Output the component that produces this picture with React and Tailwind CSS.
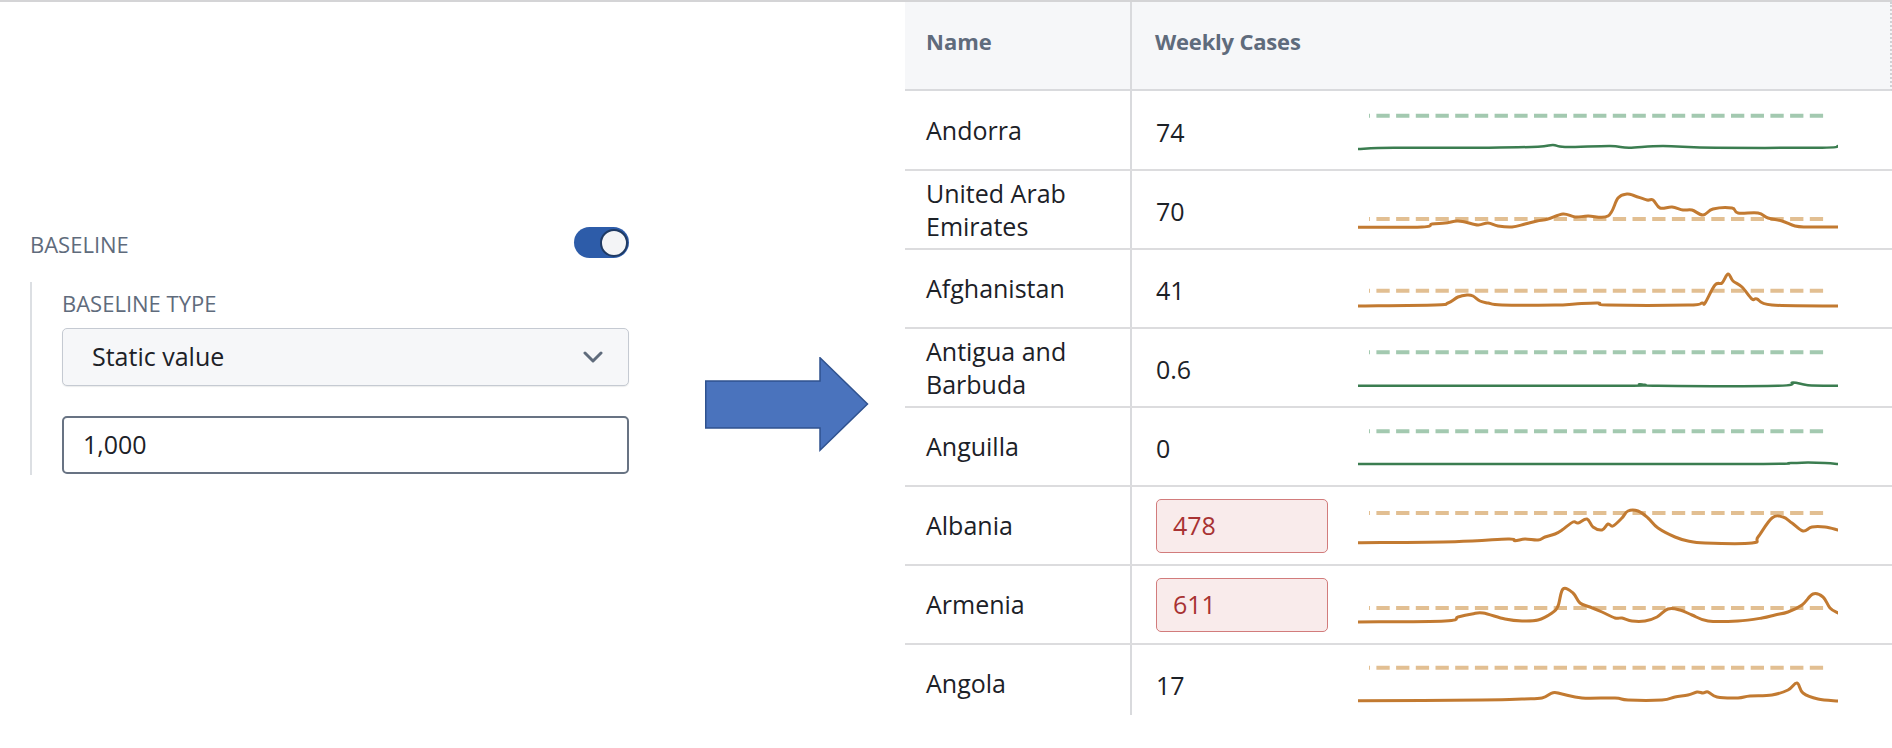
import React from "react";

const ORANGE = "#c27a31";
const ORANGE_DASH = "#e2bf92";
const GREEN = "#3b7d50";
const GREEN_DASH = "#a3c9b0";

const rows = [
  {
    name: ["Andorra"],
    value: "74",
    color: "green",
    dash: 26.7,
    off: 2,
    pts: [[0,60],[36,58.7],[131,58.7],[180,57.7],[195,56],[207,58],[252,57],[271,58.7],[305,57],[358,58.7],[464,58.7],[480,57]],
  },
  {
    name: ["United Arab", "Emirates"],
    value: "70",
    color: "orange",
    dash: 49,
    off: 1,
    pts: [[0,57.3],[64,57],[74,54],[87,53],[99,51],[107,52],[120,55],[130,53],[140,56],[154,57],[167,54],[179,51],[190,49],[205,44],[217,47],[230,46],[250,46],[260,28],[269,24],[277,26],[289,30],[295,30],[302,38],[314,37],[325,40],[334,40],[345,45],[355,39],[374,38],[380,43],[400,43],[410,48],[424,51],[437,56],[450,57],[480,57]],
  },
  {
    name: ["Afghanistan"],
    value: "41",
    color: "orange",
    dash: 41.7,
    off: 1,
    pts: [[0,57],[77,56],[90,54],[100,48],[109,46],[115,47],[122,52],[130,54],[144,56],[197,56],[217,55],[240,54],[250,56],[330,56],[344,54],[347,54],[357,36],[364,34],[370,25],[375,32],[384,38],[394,50],[399,50],[414,56],[480,57]],
  },
  {
    name: ["Antigua and", "Barbuda"],
    value: "0.6",
    color: "green",
    dash: 24.3,
    off: 1,
    pts: [[0,57.7],[260,57.7],[282,56.3],[300,57.7],[420,57.7],[435,54.5],[450,57.2],[480,57.7]],
  },
  {
    name: ["Anguilla"],
    value: "0",
    color: "green",
    dash: 24.3,
    off: 1,
    pts: [[0,57],[380,57],[433,56],[450,55.5],[467,56],[480,57]],
  },
  {
    name: ["Albania"],
    value: "478",
    alert: true,
    color: "orange",
    dash: 27,
    off: 1,
    pts: [[0,56.7],[97,55.7],[150,53],[157,54.7],[167,53],[180,54],[187,51],[197,48],[204,44],[215,36],[220,37],[229,33],[235,41],[244,44],[250,38],[255,40],[264,32],[270,25],[280,25],[290,32],[300,42],[317,51],[330,55],[347,57],[394,57],[400,51],[414,32],[425,31],[434,37],[445,45],[454,41],[467,41],[480,44]],
  },
  {
    name: ["Armenia"],
    value: "611",
    alert: true,
    color: "orange",
    dash: 43,
    off: 1,
    pts: [[0,57],[87,56],[100,52],[114,49],[125,48],[147,54],[164,56],[180,55],[194,48],[200,41],[205,24],[215,28],[222,38],[232,42],[244,47],[257,53],[264,53],[274,56],[287,56],[299,52],[310,44],[322,45],[334,50],[350,56],[380,56],[404,53],[417,50],[430,47],[444,40],[455,29],[465,32],[472,43],[480,48]],
  },
  {
    name: ["Angola"],
    value: "17",
    color: "orange",
    dash: 23.7,
    off: 1,
    pts: [[0,56.7],[124,56],[164,55],[184,54],[195,48.7],[204,50],[224,54],[257,54],[270,56],[304,56],[317,53],[330,51],[339,48],[345,49],[350,48],[359,53],[380,54],[392,52],[414,51],[430,46],[439,39],[445,49],[460,55],[480,57]],
  },
];

function smoothPath(pts) {
  const t = 0.18;
  let d = `M${pts[0][0]},${pts[0][1].toFixed(1)}`;
  for (let i = 0; i < pts.length - 1; i++) {
    const p0 = pts[i - 1] || pts[i];
    const p1 = pts[i];
    const p2 = pts[i + 1];
    const p3 = pts[i + 2] || p2;
    const c1x = p1[0] + (p2[0] - p0[0]) * t;
    const c1y = p1[1] + (p2[1] - p0[1]) * t;
    const c2x = p2[0] - (p3[0] - p1[0]) * t;
    const c2y = p2[1] - (p3[1] - p1[1]) * t;
    d += ` C${c1x.toFixed(1)},${c1y.toFixed(1)} ${c2x.toFixed(1)},${c2y.toFixed(1)} ${p2[0]},${p2[1].toFixed(1)}`;
  }
  return d;
}

function Sparkline({ row }) {
  const solid = row.color === "green" ? GREEN : ORANGE;
  const dashed = row.color === "green" ? GREEN_DASH : ORANGE_DASH;
  const pts = row.pts.map((p) => [p[0], p[1] - row.off]);
  return (
    <svg width="480" height="77" viewBox="0 0 480 77" className="block shrink-0">
      <line
        x1="11"
        x2="466"
        y1={row.dash - row.off}
        y2={row.dash - row.off}
        stroke={dashed}
        strokeWidth="4"
        strokeDasharray="13.3 6.4"
        strokeDashoffset="12.3"
      />
      <path
        d={smoothPath(pts)}
        fill="none"
        stroke={solid}
        strokeWidth={row.color === "green" ? 2.5 : 3}
        strokeLinejoin="round"
        strokeLinecap="round"
      />
    </svg>
  );
}

function Toggle() {
  return (
    <div className="w-[55px] h-[31px] rounded-full bg-[#2d5ca9] flex items-center justify-end pr-[1px]">
      <div className="w-[28px] h-[28px] rounded-full bg-[#f3f4f6] border-2 border-[#1f3a63]" />
    </div>
  );
}

function Chevron() {
  return (
    <svg width="20" height="12" viewBox="0 0 20 12" className="block">
      <path d="M2 2 L10 10 L18 2" fill="none" stroke="#5f6b7c" strokeWidth="3" strokeLinecap="round" strokeLinejoin="round" />
    </svg>
  );
}

function Arrow() {
  return (
    <svg width="164" height="96" viewBox="0 0 164 96" className="block shrink-0 ml-[76px] mt-[355px]">
      <polygon
        points="0.75,24 115,24 115,0.75 162.5,47 115,93.25 115,71 0.75,71"
        fill="#4a73bd"
        stroke="#2f528f"
        strokeWidth="1.5"
      />
    </svg>
  );
}

export default function App() {
  return (
    <div className="w-[1892px] h-[748px] bg-white border-t-2 border-[#d4d4d6] flex items-start font-['Open_Sans',sans-serif] overflow-hidden">
      {/* Left settings panel */}
      <div className="w-[905px] shrink-0 flex items-start">
        <div className="ml-[30px] mt-[225px] w-[599px]">
          <div className="flex items-center justify-between h-[31px]">
            <span className="text-[22px] leading-[31px] pt-[3px] font-medium text-[#5f6b7c]">BASELINE</span>
            <Toggle />
          </div>
          <div className="mt-[24px] border-l-2 border-[#dcdfe3] pl-[30px] pt-[6px] pb-[1px]">
            <div className="text-[22px] leading-[30px] font-medium text-[#5f6b7c]">BASELINE TYPE</div>
            <div className="mt-[10px] h-[58px] rounded-[5px] border border-[#c5cad2] bg-[#f6f7f9] shadow-[0_1px_1px_rgba(17,20,24,0.08)] flex items-center justify-between pl-[29px] pr-[25px]">
              <span className="text-[25px] font-medium text-[#1c2127]">Static value</span>
              <Chevron />
            </div>
            <div className="mt-[30px] h-[58px] rounded-[5px] border-2 border-[#687383] bg-white flex items-center pl-[19px]">
              <span className="text-[25px] font-medium text-[#1c2127]">1,000</span>
            </div>
          </div>
        </div>
        <Arrow />
      </div>

      {/* Table */}
      <div className="flex-1 h-[713px] overflow-hidden">
        <div className="flex h-[89px] bg-[#f6f7f9] border-b-2 border-[#d9dadd] border-r-2 border-r-[#cfd1d4] [border-right-style:dotted]">
          <div className="w-[227px] shrink-0 border-r-2 border-[#d9dadd] flex items-center pl-[21px] pb-[8px]">
            <span className="text-[22px] font-bold text-[#5f6b7c]">Name</span>
          </div>
          <div className="flex items-center pl-[23px] pb-[8px]">
            <span className="text-[22px] font-bold tracking-[-0.2px] text-[#5f6b7c]">Weekly Cases</span>
          </div>
        </div>
        {rows.map((row, i) => (
          <div
            key={i}
            className={`flex border-b-2 border-[#dcdcde] ${i === 0 ? "h-[80px]" : "h-[79px]"}`}
          >
            <div className="w-[227px] shrink-0 border-r-2 border-[#d9dadd] flex items-center pl-[21px]">
              <div className="text-[25px] leading-[33px] font-medium text-[#1c2127]">
                {row.name.map((n, j) => (
                  <div key={j}>{n}</div>
                ))}
              </div>
            </div>
            <div className="w-[226px] shrink-0 flex items-center pl-[24px]">
              {row.alert ? (
                <div className="w-[172px] h-[54px] rounded-[5px] border border-[#d27c7c] bg-[#f9ebeb] flex items-center pl-[16px]">
                  <span className="text-[25px] font-medium text-[#a83232]">{row.value}</span>
                </div>
              ) : (
                <span className="text-[25px] leading-[33px] pt-[4px] font-medium text-[#1c2127]">{row.value}</span>
              )}
            </div>
            <Sparkline row={row} />
          </div>
        ))}
      </div>
    </div>
  );
}
